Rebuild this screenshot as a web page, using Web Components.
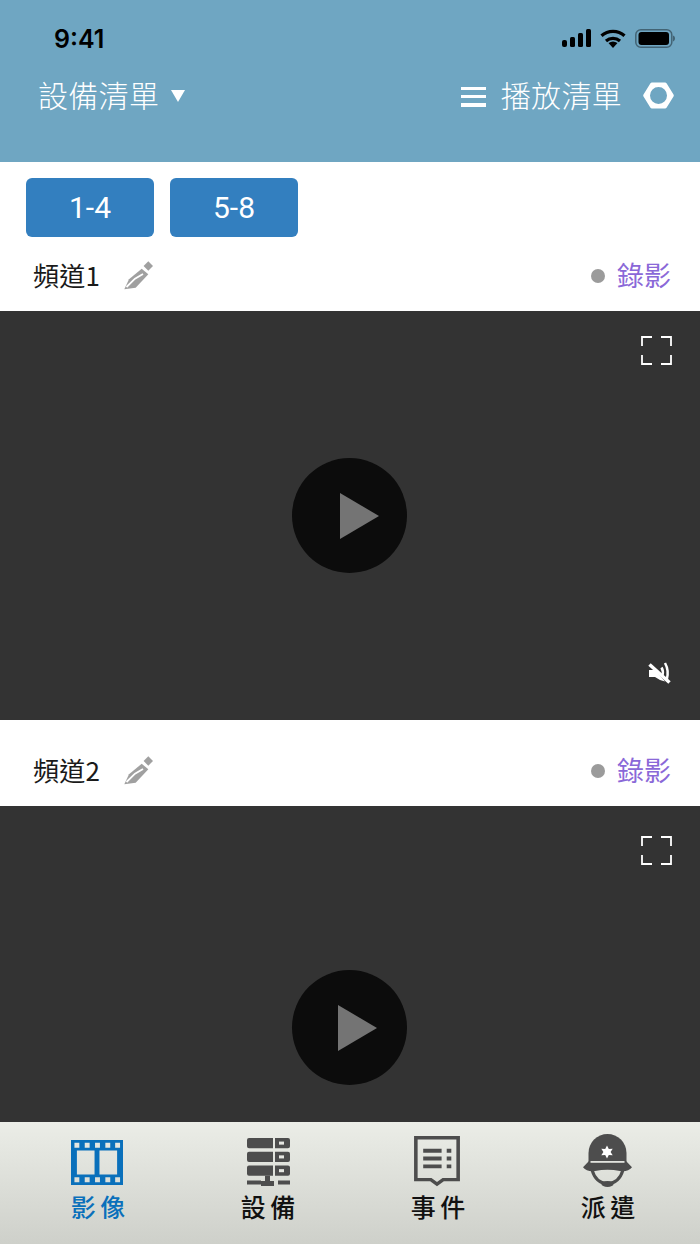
<!DOCTYPE html>
<html lang="zh-Hant">
<head>
<meta charset="utf-8">
<title>影像</title>
<style>
  html, body { margin: 0; padding: 0; height: 100%; overflow: hidden; background: #fff; }
  body { font-family: "Noto Sans CJK TC", "Noto Sans", sans-serif; }
  phone-app { height: 1244px; }
</style>
</head>
<body>
<phone-app></phone-app>

<script>
const CJK = '"Noto Sans CJK TC", "Noto Sans CJK SC", sans-serif';

class StatusBar extends HTMLElement {
    constructor() {
        super();
        this.attachShadow({ mode: 'open' }).innerHTML = `
            <style>
                :host { display: flex; justify-content: space-between; align-items: center; height: 26px; padding: 25px 25px 0 54px; color: #000; }
                .time { font: 600 25px/26px Inter, "Liberation Sans", sans-serif; margin-top: 1px; }
                .icons { display: flex; align-items: center; gap: 9px; }
                svg { display: block; }
            </style>
            <span class="time">9:41</span>
            <div class="icons">
                <svg width="29" height="18" viewBox="0 0 29 18">
                    <rect x="0" y="11" width="5" height="7" rx="2"/>
                    <rect x="8" y="8" width="5" height="10" rx="1.5"/>
                    <rect x="16" y="4" width="5" height="14" rx="1.5"/>
                    <rect x="24" y="0" width="5" height="18" rx="1.5"/>
                </svg>
                <svg width="26" height="19" viewBox="0 0 26 19">
                    <path d="M13 19l-4.500-5q4.500-3 9 0z"/>
                    <path d="M6 12c4-3.500 10-3.500 14 0" fill="none" stroke="#000" stroke-width="3.200"/>
                    <path d="M1.500 6.800C8 .8 18 .8 24.500 6.800" fill="none" stroke="#000" stroke-width="3.200"/>
                </svg>
                <svg width="40" height="19" viewBox="0 0 40 19">
                    <rect x="0.800" y="0.800" width="36" height="17.400" rx="5" fill="none" stroke="#000" stroke-opacity=".4" stroke-width="1.500"/>
                    <rect x="3.500" y="3" width="30.500" height="13" rx="3"/>
                    <path d="M38 6.500c1.300.4 2 1.600 2 3s-.7 2.600-2 3z" fill="#000" fill-opacity=".4"/>
                </svg>
            </div>`;
    }
}

class AppHeader extends HTMLElement {
    constructor() {
        super();
        this.attachShadow({ mode: 'open' }).innerHTML = `
            <style>
                :host { display: block; height: 162px; background: #6fa6c2; color: #fff; box-sizing: border-box; font-family: ${CJK}; }
                nav { display: flex; justify-content: space-between; align-items: center; height: 48px; padding: 20px 26px 0 38px; }
                .group { display: flex; align-items: center; }
                .title { font-size: 30px; font-weight: 300; line-height: 48px; letter-spacing: .3px; margin-bottom: 2px; }
                .caret { margin: 2px 0 0 12px; width: 0; height: 0; border-left: 7.500px solid transparent; border-right: 7.500px solid transparent; border-top: 12px solid #fff; }
                .menu { width: 25px; height: 20px; margin: 3px 15px 0 0; display: flex; flex-direction: column; justify-content: space-between; }
                .menu i { display: block; height: 3.500px; background: #fff; }
                .gear { margin-left: 21px; display: block; }
            </style>
            <status-bar></status-bar>
            <nav>
                <div class="group">
                    <span class="title">設備清單</span>
                    <span class="caret"></span>
                </div>
                <div class="group">
                    <span class="menu"><i></i><i></i><i></i></span>
                    <span class="title">播放清單</span>
                    <svg class="gear" width="31" height="27" viewBox="0 0 31 27">
                        <path fill="#fff" fill-rule="evenodd" d="M9 .5h13a2 2 0 0 1 1.700 1l6.800 11a2 2 0 0 1 0 2l-6.800 11a2 2 0 0 1-1.700 1H9a2 2 0 0 1-1.700-1l-6.800-11a2 2 0 0 1 0-2l6.800-11A2 2 0 0 1 9 .5zM15.500 5a8.500 8.500 0 1 0 0 17 8.500 8.500 0 0 0 0-17z"/>
                    </svg>
                </div>
            </nav>`;
    }
}

class PageButton extends HTMLElement {
    constructor() {
        super();
        this.attachShadow({ mode: 'open' }).innerHTML = `
            <style>
                :host { display: flex; align-items: center; justify-content: center; width: 128px; height: 59px; border-radius: 6px; background: #337fbf; color: #fff; font: 400 30px/59px Roboto, sans-serif; }
            </style>
            <slot></slot>`;
    }
}

class ChannelRow extends HTMLElement {
    constructor() {
        super();
        this.attachShadow({ mode: 'open' }).innerHTML = `
            <style>
                :host { display: flex; align-items: center; justify-content: space-between; box-sizing: border-box; padding: 0 29px 0 33px; background: #fff; font-family: ${CJK}; font-size: 26px; }
                .name { display: flex; align-items: center; color: #1a1a1a; letter-spacing: .3px; }
                svg.pen { margin: 6px 0 0 24px; display: block; }
                .rec { display: flex; align-items: center; color: #8a68d8; font-size: 27px; }
                .dot { width: 14px; height: 14px; border-radius: 50%; background: #9b9b9b; margin: 4px 12px 0 0; }
            </style>
            <div class="name">
                <span><slot></slot></span>
                <svg class="pen" width="32" height="32" viewBox="0 0 32 32">
                    <path fill="#a0a0a0" d="M24.300.3L29 5l-4.700 4.700L19.600 5z"/>
                    <path fill="#a0a0a0" d="M.3 28.300L5 18.300 17.700 7.700l6.600 5.600-12.600 13.400z"/>
                    <path fill="none" stroke="#fff" stroke-width="1.800" d="M2.500 26l8.500-8.300 8-4.700"/>
                </svg>
            </div>
            <div class="rec"><span class="dot"></span>錄影</div>`;
    }
}

class VideoPane extends HTMLElement {
    constructor() {
        super();
        this.attachShadow({ mode: 'open' }).innerHTML = `
            <style>
                :host { display: flex; position: relative; align-items: flex-start; justify-content: center; background: #333; overflow: hidden; }
                .play { width: 115px; height: 115px; border-radius: 50%; background: #0c0c0c; display: flex; align-items: center; justify-content: center; margin: var(--play-top, 147px) 1px 0 0; }
                .play svg { display: block; margin-left: var(--tri-shift, 20px); }
                .full { position: absolute; top: 25px; right: 28px; }
                .full.low { top: 30px; }
                .mute { position: absolute; right: 29px; bottom: 36px; }
                svg { display: block; }
            </style>
            <svg class="full" width="31" height="29" viewBox="0 0 31 29" fill="none" stroke="#fff" stroke-width="1.800">
                <path d="M1 10V1h10M20 1h10v9M30 19v9H20M11 28H1v-9"/>
            </svg>
            <div class="play">
                <svg width="39" height="46" viewBox="0 0 39 46"><path fill="#747474" d="M0 0l39 23L0 46z"/></svg>
            </div>
            <svg class="mute" width="24" height="24" viewBox="0 0 24 24">
                <path fill="#fff" d="M2 10h6l10 11.500-5-1.500-5-3H2z"/>
                <path fill="none" stroke="#fff" stroke-width="3.500" d="M2.500 4.500l20 18"/>
                <path fill="none" stroke="#fff" stroke-width="2.500" d="M14.500 7.500c1.500 2.500 1.800 5 1 8M18 3c2.800 5 3.300 11 1.800 16.500"/>
            </svg>`;
    }
    connectedCallback() {
        if (!this.hasAttribute('muted')) this.shadowRoot.querySelector('.mute').remove();
        if (this.hasAttribute('low')) this.shadowRoot.querySelector('.full').classList.add('low');
    }
}

const TAB_ICONS = {
    film: `<svg style="margin:0 2px 3px 0" width="52" height="45" viewBox="0 0 53 47" preserveAspectRatio="none">
        <path fill="#0a70bb" fill-rule="evenodd" d="M0 0h53v47H0zM3.500 3v5h5V3zM14 3v5h5V3zM24.500 3v5h5V3zM35 3v5h5V3zM45 3v5h5V3zM3.500 39v5h5v-5zM14 39v5h5v-5zM24.500 39v5h5v-5zM35 39v5h5v-5zM45 39v5h5v-5zM6 11v25h18V11zM29 11v25h18V11z"/></svg>`,
    server: `<svg style="margin-bottom:2px" width="43" height="48" viewBox="0 0 43 47" preserveAspectRatio="none">
        <g fill="#4d4d4d">
            <path d="M2 0h24v10H2a2 2 0 0 1-2-2V2a2 2 0 0 1 2-2zM28 0h13a2 2 0 0 1 2 2v6a2 2 0 0 1-2 2H28zM2 13.500h24v10H2a2 2 0 0 1-2-2v-6a2 2 0 0 1 2-2zM28 13.500h13a2 2 0 0 1 2 2v6a2 2 0 0 1-2 2H28zM2 27h24v10H2a2 2 0 0 1-2-2v-6a2 2 0 0 1 2-2zM28 27h13a2 2 0 0 1 2 2v6a2 2 0 0 1-2 2H28z"/>
            <path d="M18 37h5v5h4v5H14v-1.500H0v-4h14V42h4zM31 41.500h12v4H31z"/>
        </g>
        <g fill="#e6e7e2"><rect x="32" y="3.500" width="5" height="3"/><rect x="32" y="17" width="5" height="3"/><rect x="32" y="30.500" width="5" height="3"/></g></svg>`,
    doc: `<svg style="margin:0 2px 1px 0" width="46" height="51" viewBox="0 0 45 52" preserveAspectRatio="none">
        <path fill="none" stroke="#4d4d4d" stroke-width="3.500" d="M1.800 1.800h41.400v42.700H28.500l-6 4.500-6-4.500H1.800z"/>
        <path fill="#4d4d4d" d="M9 13h18v4H9zM9 21h18v4H9zM9 29h18v4H9zM32 13h4.500v4H32zM32 21h4.500v4H32zM32 29h4.500v4H32z"/></svg>`,
    police: `<svg style="margin:0 1px 1px 0" width="49" height="53" viewBox="0 0 49 53">
        <path fill="#4d4d4d" d="M5.500 29V19a19 19 0 0 1 38 0v10z"/>
        <path fill="#4d4d4d" d="M0 33.300L6 27h37l6 6.300q-4 4.700-12 3.700-12.500-2.500-25 0-8 1-12-3.700z"/>
        <rect x="7.500" y="27" width="34" height="1.800" fill="#e2e3de"/>
        <path fill="none" stroke="#4d4d4d" stroke-width="3" d="M9 36c3 10 9 13.500 15.500 13.500S37 46 40 36"/>
        <ellipse cx="24.500" cy="50" rx="6" ry="3" fill="#4d4d4d"/>
        <path fill="#fff" d="M24 11.500l1.800 3.500 3.900-.2-2.100 3.200 2.100 3.200-3.900-.2-1.800 3.500-1.800-3.500-3.900.2 2.100-3.200-2.100-3.200 3.900.2z"/>
    </svg>`
};

class TabItem extends HTMLElement {
    constructor() {
        super();
        this.attachShadow({ mode: 'open' });
    }
    connectedCallback() {
        const active = this.hasAttribute('active');
        this.shadowRoot.innerHTML = `
            <style>
                :host { display: flex; flex-direction: column; align-items: center; font-family: ${CJK}; }
                .icon { height: 52px; display: flex; align-items: flex-end; justify-content: center; margin-top: 14px; }
                svg { display: block; }
                .label { font-size: 25px; line-height: 30px; font-weight: 500; letter-spacing: 4.500px; margin-right: -4.500px; margin-top: 3px; color: ${active ? '#0a70bb' : '#111'}; }
            </style>
            <div class="icon">${TAB_ICONS[this.getAttribute('icon')]}</div>
            <div class="label"><slot></slot></div>`;
    }
}

class TabBar extends HTMLElement {
    constructor() {
        super();
        this.attachShadow({ mode: 'open' }).innerHTML = `
            <style>
                :host { display: grid; grid-template-columns: repeat(4, 170px); height: 122px; padding: 0 7px 0 13px; box-sizing: border-box; background: linear-gradient(#ebede7, #ced0ca); }
            </style>
            <slot></slot>`;
    }
}

class PhoneApp extends HTMLElement {
    constructor() {
        super();
        this.attachShadow({ mode: 'open' }).innerHTML = `
            <style>
                :host { display: flex; flex-direction: column; width: 700px; background: #fff; }
                .pages { display: flex; gap: 16px; padding: 16px 26px 0; }
                channel-row.first { height: 74px; }
                channel-row.second { height: 86px; padding-top: 12px; }
                video-pane.first { height: 409px; }
                video-pane.second { flex: 1; min-height: 0; --play-top: 164px; --tri-shift: 16px; }
                tab-bar { flex: none; }
            </style>
            <app-header></app-header>
            <div class="pages">
                <page-button>1-4</page-button>
                <page-button>5-8</page-button>
            </div>
            <channel-row class="first">頻道1</channel-row>
            <video-pane class="first" muted></video-pane>
            <channel-row class="second">頻道2</channel-row>
            <video-pane class="second" low></video-pane>
            <tab-bar>
                <tab-item icon="film" active>影像</tab-item>
                <tab-item icon="server">設備</tab-item>
                <tab-item icon="doc">事件</tab-item>
                <tab-item icon="police">派遣</tab-item>
            </tab-bar>`;
    }
}

customElements.define('status-bar', StatusBar);
customElements.define('app-header', AppHeader);
customElements.define('page-button', PageButton);
customElements.define('channel-row', ChannelRow);
customElements.define('video-pane', VideoPane);
customElements.define('tab-item', TabItem);
customElements.define('tab-bar', TabBar);
customElements.define('phone-app', PhoneApp);
</script>
</body>
</html>
